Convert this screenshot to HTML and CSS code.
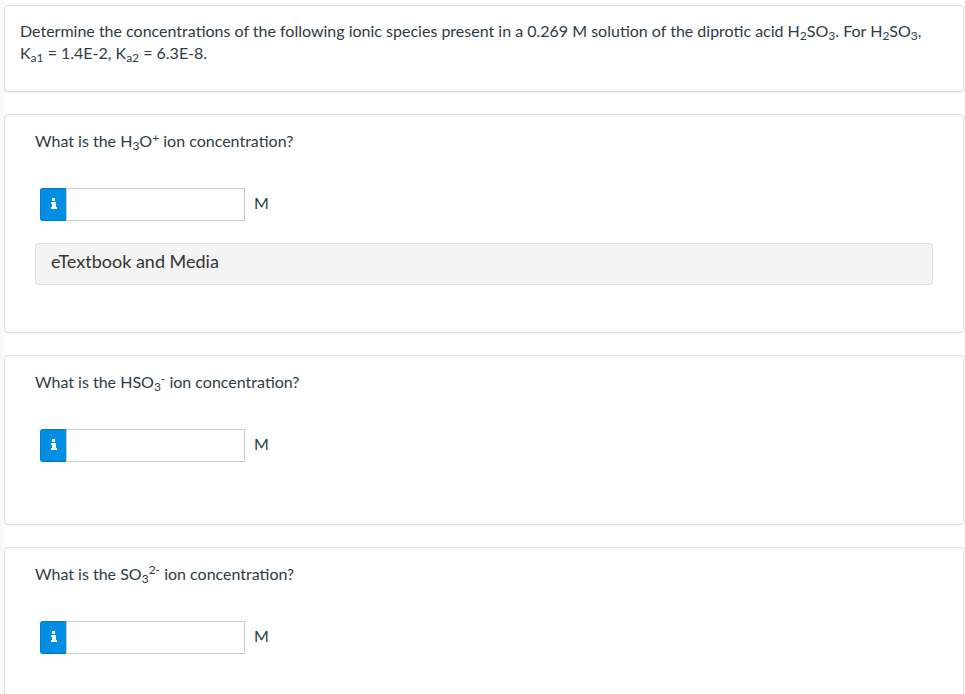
FILE: index.html
```html
<!DOCTYPE html>
<html lang="en">
<head>
    <meta charset="UTF-8">
    <meta name="viewport" content="width=device-width, initial-scale=1.0">
    <title>Diprotic Acid Question</title>
    <link rel="stylesheet" href="styles.css">
</head>
<body>
    <main class="assessment">
        <section class="card intro">
            <p>Determine the concentrations of the following ionic species present in a 0.269 M solution of the diprotic acid H<sub>2</sub>SO<sub>3</sub>. For H<sub>2</sub>SO<sub>3</sub>, K<sub>a1</sub> = 1.4E-2, K<sub>a2</sub> = 6.3E-8.</p>
        </section>

        <section class="card question">
            <label class="prompt" for="hydronium">What is the H<sub>3</sub>O<sup class="charge">+</sup> ion concentration?</label>
            <div class="answer">
                <button type="button" class="info" aria-label="Information">
                    <svg width="6" height="13" viewBox="0 0 6 13"><path d="M1 0h3v3H1zM0 4h5v5h1v2H0V9h1V6H0z"/></svg>
                </button>
                <input type="text" id="hydronium">
                <span class="unit">M</span>
            </div>
            <button type="button" class="media">eTextbook and Media</button>
        </section>

        <section class="card question">
            <label class="prompt" for="bisulfite">What is the HSO<sub>3</sub><sup class="charge">-</sup> ion concentration?</label>
            <div class="answer">
                <button type="button" class="info" aria-label="Information">
                    <svg width="6" height="13" viewBox="0 0 6 13"><path d="M1 0h3v3H1zM0 4h5v5h1v2H0V9h1V6H0z"/></svg>
                </button>
                <input type="text" id="bisulfite">
                <span class="unit">M</span>
            </div>
        </section>

        <section class="card question">
            <label class="prompt" for="sulfite">What is the SO<sub>3</sub><sup>2-</sup> ion concentration?</label>
            <div class="answer">
                <button type="button" class="info" aria-label="Information">
                    <svg width="6" height="13" viewBox="0 0 6 13"><path d="M1 0h3v3H1zM0 4h5v5h1v2H0V9h1V6H0z"/></svg>
                </button>
                <input type="text" id="sulfite">
                <span class="unit">M</span>
            </div>
        </section>
    </main>
</body>
</html>
```
FILE: styles.css
```css
* {
    box-sizing: border-box;
}

html {
    scrollbar-width: none;
}

body {
    margin: 0;
    padding: 0 1px 0 4px;
    background-color: #fafafa;
    color: #2d3b45;
    font-family: Lato, "Liberation Sans", sans-serif;
    font-size: 16px;
    line-height: 22px;
}

.assessment {
    display: flex;
    flex-direction: column;
    gap: 22px;
    padding: 5px 0 22px;
    background-color: #fefefe;
}

.card {
    background-color: #fff;
    border: 1px solid #ddd;
    border-radius: 4px;
    box-shadow: 0 1px 1px rgba(0, 0, 0, 0.05);
}

.intro {
    padding: 14px 15px 27px;
}

.intro p {
    margin: 0;
}

.question {
    padding: 15px 30px 62px;
}

.question:has(.media) {
    padding-bottom: 47px;
}

.prompt {
    display: block;
}

sub,
sup {
    font-size: 12px;
    line-height: 0;
}

sub {
    vertical-align: -3px;
}

sup {
    vertical-align: 6px;
}

.charge {
    vertical-align: 5px;
}

.answer {
    display: flex;
    align-items: stretch;
    margin: 36px 5px 0;
}

.info {
    display: flex;
    align-items: center;
    justify-content: center;
    width: 26px;
    padding: 0;
    border: 1px solid #0079cf;
    border-right: none;
    border-radius: 3px 0 0 3px;
    background-color: #028ee1;
    cursor: pointer;
}

.info svg {
    fill: #fff;
}

.answer input {
    width: 179px;
    height: 33px;
    padding: 5px 10px;
    border: 1px solid #c7cdd1;
    border-radius: 0;
    background-color: #fff;
    color: #2d3b45;
    font: inherit;
}

.unit {
    margin-left: 9px;
    padding-top: 4px;
}

.media {
    display: block;
    width: 100%;
    margin-top: 22px;
    padding: 6px 15px 12px;
    border: 1px solid #ddd;
    border-radius: 3px;
    background-color: #f4f4f4;
    color: #333;
    font-family: inherit;
    font-size: 18px;
    line-height: 22px;
    text-align: left;
    cursor: pointer;
}
```
